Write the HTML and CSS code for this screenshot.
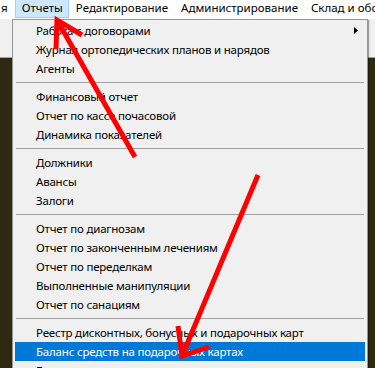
FILE: index.html
```html
<!DOCTYPE html>
<html lang="ru">
<head>
    <meta charset="UTF-8">
    <meta name="viewport" content="width=device-width, initial-scale=1.0">
    <title>Отчеты</title>
    <link rel="stylesheet" href="styles.css">
</head>
<body>
    <div class="window">
        <div class="menubar">
            <span class="menubar-item first">я</span>
            <span class="menubar-item active">Отчеты</span>
            <span class="menubar-item">Редактирование</span>
            <span class="menubar-item">Администрирование</span>
            <span class="menubar-item">Склад и оборудование</span>
        </div>
        <div class="toolbar"></div>
        <div class="workspace"></div>

        <ul class="dropdown">
            <li class="item">
                <span>Работа с договорами</span>
                <svg class="submenu-arrow" width="4" height="7" viewBox="0 0 4 7"><path d="M0 0 L4 3.5 L0 7 Z" fill="#000"/></svg>
            </li>
            <li class="item"><span>Журнал ортопедических планов и нарядов</span></li>
            <li class="item"><span>Агенты</span></li>
            <li class="separator"></li>
            <li class="item"><span>Финансовый отчет</span></li>
            <li class="item"><span>Отчет по кассе почасовой</span></li>
            <li class="item"><span>Динамика показателей</span></li>
            <li class="separator"></li>
            <li class="item"><span>Должники</span></li>
            <li class="item"><span>Авансы</span></li>
            <li class="item"><span>Залоги</span></li>
            <li class="separator"></li>
            <li class="item"><span>Отчет по диагнозам</span></li>
            <li class="item"><span>Отчет по законченным лечениям</span></li>
            <li class="item"><span>Отчет по переделкам</span></li>
            <li class="item"><span>Выполненные манипуляции</span></li>
            <li class="item"><span>Отчет по санациям</span></li>
            <li class="separator"></li>
            <li class="item"><span>Реестр дисконтных, бонусных и подарочных карт</span></li>
            <li class="item selected"><span>Баланс средств на подарочных картах</span></li>
            <li class="item"><span>Бонусы</span></li>
        </ul>

        <!-- red arrows drawn over the screenshot -->
        <svg class="annotations" viewBox="0 0 375 368" width="375" height="368">
            <g stroke="#ff0000" stroke-width="5" fill="none" stroke-linejoin="miter">
                <line x1="135" y1="157" x2="57" y2="20"/>
                <polyline points="56,49 57,20 82,35"/>
                <line x1="258" y1="175" x2="182" y2="356"/>
                <polyline points="178,326 182,356 209,347"/>
            </g>
        </svg>
    </div>
</body>
</html>
```

FILE: styles.css
```css
body {
    margin: 0;
    background-color: #2e2a12;
    font-family: 'Noto Sans', 'DejaVu Sans', sans-serif;
    font-size: 11.5px;
    letter-spacing: -0.2px;
    color: #000;
    overflow: hidden;
}

.window {
    position: relative;
    width: 375px;
    height: 368px;
    overflow: hidden;
}

.menubar {
    display: flex;
    align-items: flex-start;
    height: 19px;
    background-color: #fff;
    white-space: nowrap;
    letter-spacing: 0;
}

.menubar-item {
    height: 17px;
    line-height: 16px;
    padding: 0 5px 0 6px;
    border: 1px solid transparent;
    border-top: 0;
    flex-shrink: 0;
}

.menubar-item.first {
    padding: 0 6px 0 0;
}

.menubar-item.active {
    background-color: #cce8ff;
    border-color: #99d1ff;
}

.toolbar {
    height: 38px;
    background-color: #f0f0f0;
    border-bottom: 1px solid #a0a0a0;
}

.dropdown {
    position: absolute;
    top: 19px;
    left: 12px;
    width: 350px;
    margin: 0;
    padding: 1px 2px 2px;
    list-style: none;
    background-color: #f0f0f0;
    border: 1px solid #979797;
    box-shadow: 1px 1px 1px rgba(0, 0, 0, 0.35);
}

.item {
    display: flex;
    align-items: center;
    height: 19px;
    padding: 0 7px 0 21px;
    white-space: nowrap;
}

.item.selected {
    background-color: #0078d7;
    color: #fff;
}

.submenu-arrow {
    margin-left: auto;
}

.separator {
    height: 1px;
    margin: 4px 1px;
    background-color: #a0a0a0;
}

.annotations {
    position: absolute;
    top: 0;
    left: 0;
    pointer-events: none;
}
```
